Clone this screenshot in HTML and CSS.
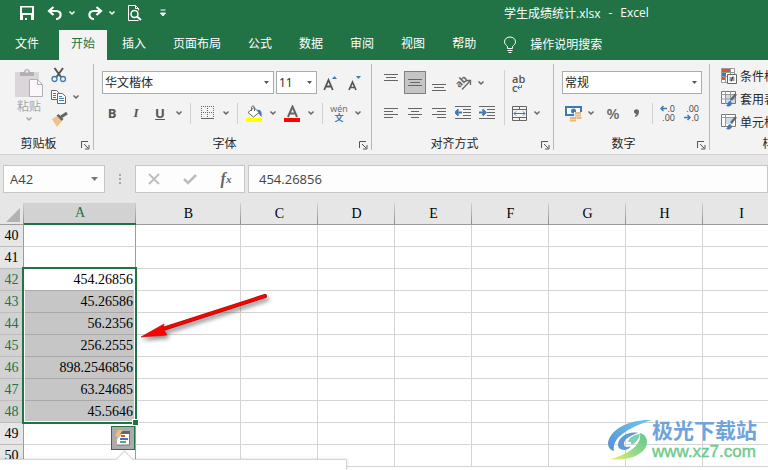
FILE: index.html
```html
<!DOCTYPE html>
<html lang="zh-CN">
<head>
  <meta charset="UTF-8" />
  <meta name="viewport" content="width=device-width, initial-scale=1.0"/>
  <title>学生成绩统计.xlsx - Excel</title>
  <link rel="stylesheet" href="styles.css">
</head>
<body>
  <svg class="defs" width="0" height="0" aria-hidden="true">
    <symbol id="chev" viewBox="0 0 8 6"><path d="M1.5 1.5 4 4 6.5 1.5" fill="none" stroke="currentColor" stroke-width="1.5"/></symbol>
    <symbol id="launch" viewBox="0 0 9 9"><path d="M.5 7V.5H7M3 3l4 4M8 4v4H4" fill="none" stroke="currentColor"/></symbol>
  </svg>

  <header class="top">
    <div class="titlebar">
      <button class="icon-btn" aria-label="保存"><svg width="14" height="14" viewBox="0 0 14 14"><path d="M0 0h14v14H0zM2 1.500V7h10V1.500zM3 9v5h2v-2h2v2h4V9z" fill="#fff" fill-rule="evenodd"/></svg></button>
      <div class="split">
        <button class="icon-btn" aria-label="撤消"><svg width="16" height="14" viewBox="0 0 16 14"><path d="M2 5h7.500c6 0 5 8-.5 8M6.500 1l-4.500 4 4.500 4" fill="none" stroke="#fff" stroke-width="2.200"/></svg></button>
        <button class="chev" aria-label="撤消列表"><svg width="8" height="6"><use href="#chev"/></svg></button>
      </div>
      <div class="split">
        <button class="icon-btn" aria-label="恢复"><svg width="16" height="14" viewBox="0 0 16 14"><path d="M14 5H6.500c-6 0-5 8 .5 8M9.500 1 14 5 9.500 9" fill="none" stroke="#fff" stroke-width="2.200"/></svg></button>
        <button class="chev" aria-label="恢复列表"><svg width="8" height="6"><use href="#chev"/></svg></button>
      </div>
      <button class="icon-btn" aria-label="打印预览"><svg width="16" height="16" viewBox="0 0 16 16" fill="none" stroke="#fff"><path d="M11.500 15.500H1.500V.5h7l3 3v2M8.500.5v3h3"/><circle cx="7.500" cy="9" r="3.500" stroke-width="1.500"/><path d="m10 11.500 4 3.500" stroke-width="2"/></svg></button>
      <button class="icon-btn" aria-label="自定义快速访问工具栏"><svg width="6" height="8" viewBox="0 0 6 8"><path d="M.5 1h5M.5 4h5L3 7z" fill="#fff" stroke="#fff"/></svg></button>
      <div class="doc-title"><span>学生成绩统计.xlsx</span><span>-</span><span>Excel</span></div>
    </div>
    <nav class="tabs">
      <a class="tab file" href="#">文件</a>
      <a class="tab active" href="#">开始</a>
      <a class="tab" href="#">插入</a>
      <a class="tab" href="#">页面布局</a>
      <a class="tab" href="#">公式</a>
      <a class="tab" href="#">数据</a>
      <a class="tab" href="#">审阅</a>
      <a class="tab" href="#">视图</a>
      <a class="tab" href="#">帮助</a>
      <a class="tab tell-me" href="#"><svg width="14" height="18" viewBox="0 0 14 18" fill="none" stroke="#fff"><path d="M4.500 12.500v-2C3 9 1.500 8 1.500 5.800 1.500 3 4 1 7 1s5.500 2 5.500 4.800c0 2.200-1.500 3.200-3 4.700v2zM4.500 14.500h5M5.500 16.500h3"/></svg>操作说明搜索</a>
    </nav>
  </header>

  <section class="ribbon">
    <div class="group clipboard">
      <div class="content">
        <button class="paste" disabled>
          <svg width="30" height="30" viewBox="0 0 30 30"><path d="M1 4h24v25H1z" fill="#dad6da"/><path d="M6 8V4h4c0-4 6-4 6 0h4v4z" fill="#b3b0b3"/><circle cx="13" cy="3.500" r="1.300" fill="#f3f3f3"/><path d="M15.500 11.500h8l5 5v12h-13z" fill="#fbf7fb" stroke="#b3aeb5"/><path d="M23.500 11.500v5h5" fill="none" stroke="#b3aeb5"/></svg>
          <span>粘贴</span>
          <svg width="8" height="6"><use href="#chev"/></svg>
        </button>
        <div class="stack">
          <button class="icon-btn" aria-label="剪切"><svg width="16" height="16" viewBox="0 0 16 16" fill="none"><path d="M3.500 1 10 10M12 1 5.500 10" stroke="#555" stroke-width="2"/><circle cx="3.500" cy="12" r="2.500" stroke="#3f79b5" stroke-width="1.300"/><circle cx="12" cy="12" r="2.500" stroke="#3f79b5" stroke-width="1.300"/></svg></button>
          <div class="split">
            <button class="icon-btn" aria-label="复制"><svg width="16" height="14" viewBox="0 0 16 14" fill="#fff" stroke="#666"><path d="M.5.5h5l2 2v7h-7z"/><path d="M6.500 3.500h5l3 3v7h-8z"/><path d="M2 3.500h3M2 5.500h3M2 7.500h3M8 6.500h3M8 8.500h5M8 10.500h5" stroke="#3f79b5"/></svg></button>
            <button class="chev" aria-label="复制选项"><svg width="8" height="6"><use href="#chev"/></svg></button>
          </div>
          <button class="icon-btn" aria-label="格式刷"><svg width="17" height="15" viewBox="0 0 17 15"><path d="M1 7l5-3 5 5-5 6z" fill="#ecc48a"/><path d="m5.500 3.500 2-1.500 5 5-1.800 2z" fill="#666"/><path d="m10 5 6-4" stroke="#666" stroke-width="3"/></svg></button>
        </div>
      </div>
      <div class="footer"><span>剪贴板</span><button class="launcher" aria-label="剪贴板设置"><svg width="9" height="9"><use href="#launch"/></svg></button></div>
    </div>

    <div class="group font">
      <div class="content rows">
        <div class="row tight">
          <select class="combo font-name" aria-label="字体"><option>华文楷体</option></select>
          <select class="combo font-size" aria-label="字号"><option>11</option></select>
          <button class="tool" aria-label="增大字号"><svg width="14" height="16" viewBox="0 0 14 16"><path d="M1.200 15 5.500 5l4.300 10M2.800 11.500h5.400" fill="none" stroke="#555" stroke-width="1.800"/><path d="m9 4 2.500-3L14 4z" fill="#3f79b5"/></svg></button>
          <button class="tool" aria-label="减小字号"><svg width="14" height="16" viewBox="0 0 14 16"><path d="M2 15 5.500 7 9 15M3.500 12.500h4" fill="none" stroke="#555" stroke-width="1.700"/><path d="m9 1 2.500 3L14 1z" fill="#3f79b5"/></svg></button>
        </div>
        <div class="row loose">
          <button class="icon-btn letter bold">B</button>
          <button class="icon-btn letter italic">I</button>
          <button class="icon-btn letter under">U</button>
          <button class="chev" aria-label="下划线选项"><svg width="8" height="6"><use href="#chev"/></svg></button>
          <span class="sep"></span>
          <button class="icon-btn" aria-label="边框"><svg width="13" height="14" viewBox="0 0 13 14" fill="none" stroke="#666"><path d="M0 .5h13M0 6.500h13M.5 0v12M6.500 0v12M12.500 0v12" stroke-dasharray="1 1"/><path d="M0 12.500h13" stroke-width="1"/></svg></button>
          <button class="chev" aria-label="边框选项"><svg width="8" height="6"><use href="#chev"/></svg></button>
          <span class="sep"></span>
          <button class="icon-btn" aria-label="填充颜色"><svg width="16" height="17" viewBox="0 0 16 17"><path d="M11 5c4-1 5 2 4.500 7L13 9z" fill="#3f79b5"/><path d="m2 7.500 6-5 5 5L7.500 12z" fill="#fff" stroke="#666"/><path d="M5.500 6V2.500c0-2 3-2 3 0V6" fill="none" stroke="#666"/><path d="M0 13h16v4H0z" fill="#ff0"/></svg></button>
          <button class="chev" aria-label="填充颜色选项"><svg width="8" height="6"><use href="#chev"/></svg></button>
          <button class="icon-btn" aria-label="字体颜色"><svg width="16" height="17" viewBox="0 0 16 17"><path d="M4 12 8.500 1.500 13 12M5.500 8.500h6" fill="none" stroke="#666" stroke-width="2"/><path d="M0 13h16v4H0z" fill="red"/></svg></button>
          <button class="chev" aria-label="字体颜色选项"><svg width="8" height="6"><use href="#chev"/></svg></button>
          <span class="sep"></span>
          <button class="icon-btn phonetic"><span>wén</span><b>文</b></button>
          <button class="chev" aria-label="拼音选项"><svg width="8" height="6"><use href="#chev"/></svg></button>
        </div>
      </div>
      <div class="footer"><span>字体</span><button class="launcher" aria-label="字体设置"><svg width="9" height="9"><use href="#launch"/></svg></button></div>
    </div>

    <div class="group align">
      <div class="content">
        <div class="rows align-main">
          <div class="row tight">
            <button class="tool" aria-label="顶端对齐"><svg width="14" height="18" viewBox="0 0 14 18"><path d="M0 .5h14M2 3.500h10M0 6.500h14" stroke="#666"/></svg></button>
            <button class="tool pressed" aria-label="垂直居中"><svg width="14" height="8" viewBox="0 0 14 8"><path d="M0 .5h14M2 3.500h10M0 6.500h14" stroke="#666"/></svg></button>
            <button class="tool" aria-label="底端对齐"><svg width="14" height="18" viewBox="0 0 14 18"><path d="M0 10.500h14M2 13.500h10M0 16.500h14" stroke="#666"/></svg></button>
            <button class="tool" aria-label="方向"><svg class="orient" width="17" height="17" viewBox="0 0 17 17"><text x="0" y="12" transform="rotate(-45 5 8)">ab</text><path d="M7 15.500 15 7M11 6.500h4.500V11" fill="none" stroke="#666" stroke-width="1.300"/></svg></button>
            <button class="chev" aria-label="方向选项"><svg width="8" height="6"><use href="#chev"/></svg></button>
          </div>
          <div class="row tight">
            <button class="tool" aria-label="左对齐"><svg width="14" height="12" viewBox="0 0 14 12"><path d="M0 1.500h14M0 4.500h9M0 7.500h14M0 10.500h9" stroke="#666"/></svg></button>
            <button class="tool" aria-label="居中"><svg width="14" height="12" viewBox="0 0 14 12"><path d="M0 1.500h14M3 4.500h8M0 7.500h14M3 10.500h8" stroke="#666"/></svg></button>
            <button class="tool" aria-label="右对齐"><svg width="14" height="12" viewBox="0 0 14 12"><path d="M0 1.500h14M5 4.500h9M0 7.500h14M5 10.500h9" stroke="#666"/></svg></button>
            <button class="tool" aria-label="减少缩进量"><svg width="16" height="14" viewBox="0 0 16 14"><path d="M0 .5h16M8 3.500h8M8 6.500h8M8 9.500h8M0 12.500h16" stroke="#666"/><path d="M7 6.500H1M3.500 3.500l-3 3 3 3" fill="none" stroke="#3f79b5" stroke-width="2"/></svg></button>
            <button class="tool" aria-label="增加缩进量"><svg width="16" height="14" viewBox="0 0 16 14"><path d="M0 .5h16M8 3.500h8M8 6.500h8M8 9.500h8M0 12.500h16" stroke="#666"/><path d="M0 6.500h6M3.500 3.500l3 3-3 3" fill="none" stroke="#3f79b5" stroke-width="2"/></svg></button>
          </div>
        </div>
        <div class="rows align-side">
          <div class="row tight">
            <button class="tool wrap"><span>ab</span><span>c<svg width="5" height="5" viewBox="0 0 5 5"><path d="M4.500 0v2.500H1M2.500.5l-2 2 2 2" fill="none" stroke="#3f79b5"/></svg></span></button>
          </div>
          <div class="row tight">
            <button class="tool" aria-label="合并后居中"><svg width="15" height="15" viewBox="0 0 15 15" fill="none" stroke="#666"><path d="M.5.5h14v14H.5zM0 3.500h15M0 11.500h15M7.500 0v3M7.500 12v3"/><path d="M2 7.500h11M4 5.500l-2 2 2 2M11 5.500l2 2-2 2" stroke="#3f79b5"/></svg></button>
            <button class="chev" aria-label="合并选项"><svg width="8" height="6"><use href="#chev"/></svg></button>
          </div>
        </div>
      </div>
      <div class="footer"><span>对齐方式</span><button class="launcher" aria-label="对齐设置"><svg width="9" height="9"><use href="#launch"/></svg></button></div>
    </div>

    <div class="group number">
      <div class="content rows">
        <div class="row tight">
          <select class="combo format" aria-label="数字格式"><option>常规</option></select>
        </div>
        <div class="row tight">
          <button class="tool" aria-label="会计数字格式"><svg width="17" height="17" viewBox="0 0 17 17"><path d="M1 2h15v8H1z" fill="#fff" stroke="#3f79b5" stroke-width="2"/><circle cx="8.500" cy="6" r="2.500" fill="#3f79b5"/><path d="M9 7h8v9H4v-4h5z" fill="#f3f3f3"/><path d="M10 8h6M10 10.500h6M5 13h6M5 15.500h6M11.500 13h5" stroke="#e8b878" stroke-width="1.800"/></svg></button>
          <button class="chev after" aria-label="会计格式选项"><svg width="8" height="6"><use href="#chev"/></svg></button>
          <button class="tool sign">%</button>
          <button class="tool" aria-label="千位分隔样式"><svg width="6" height="9" viewBox="0 0 6 9"><path d="M0 2.500C0-.5 5-.5 5 2.500 5 6 3 7.500 1 8V6.500C2 6 2.500 5.500 2.500 5 1 5 0 4 0 2.500z" fill="#666"/></svg></button>
          <span class="sep"></span>
          <button class="tool decimals"><span><svg width="7" height="7" viewBox="0 0 7 7"><path d="M7 3.500H1M3.500 1 1 3.500 3.500 6" fill="none" stroke="#3f79b5" stroke-width="1.500"/></svg>.0</span><span>.00</span></button>
          <button class="tool decimals"><span>.00</span><span><svg width="7" height="7" viewBox="0 0 7 7"><path d="M0 3.500h6M3.500 1 6 3.500 3.500 6" fill="none" stroke="#3f79b5" stroke-width="1.500"/></svg>.0</span></button>
        </div>
      </div>
      <div class="footer"><span>数字</span><button class="launcher" aria-label="数字设置"><svg width="9" height="9"><use href="#launch"/></svg></button></div>
    </div>

    <div class="group styles">
      <div class="content stack">
        <button class="style-btn"><svg width="16" height="16" viewBox="0 0 16 16"><path d="M.5.5h13v14H.5z" fill="#fff" stroke="#999"/><path d="M0 4.500h14M0 8.500h14M4.500 0v15M9.500 0v8" stroke="#999"/><path d="M1 1h8v3H1z" fill="#d65532"/><path d="M1 5h4v3H1z" fill="#3f79b5"/><path d="M1 9h3v3H1z" fill="#d65532"/><path d="M6.500 6.500h9v9h-9z" fill="#fff" stroke="#666"/><path d="M8.500 10h5M8.500 12h5M12 8.500l-2 5" stroke="#333"/></svg>条件格式</button>
        <button class="style-btn"><svg width="16" height="16" viewBox="0 0 16 16"><path d="M.5.5h14v12H.5z" fill="#fff" stroke="#777"/><path d="M4 4h10v8H4z" fill="#c9dcee"/><path d="M0 3.500h15M0 8h15M4.500 0v13M9.500 0v13" stroke="#999"/><path d="m15 3-5 6" stroke="#666" stroke-width="2.500"/><path d="M5 15c2-1 1-4 4-5l2 2c0 3-3 4-6 3z" fill="#3f79b5"/></svg>套用表格格式</button>
        <button class="style-btn"><svg width="16" height="16" viewBox="0 0 16 16"><path d="M.5.5h14v12H.5z" fill="#fff" stroke="#777"/><path d="M4 4h8v6H4z" fill="#c9dcee"/><path d="M0 3.500h15M4.500 0v13" stroke="#999"/><path d="m15 3-5 6" stroke="#666" stroke-width="2.500"/><path d="M5 15c2-1 1-4 4-5l2 2c0 3-3 4-6 3z" fill="#3f79b5"/></svg>单元格样式</button>
      </div>
      <div class="footer"><span>样式</span></div>
    </div>
  </section>

  <section class="formula-bar">
    <div class="name-box">
      <input type="text" value="A42" aria-label="名称框">
      <button aria-label="名称列表"><svg width="7" height="4" viewBox="0 0 7 4"><path d="M0 0h7L3.500 4z" fill="#777"/></svg></button>
    </div>
    <span class="dots"><i></i><i></i><i></i></span>
    <div class="entry-btns">
      <button aria-label="取消"><svg width="12" height="12" viewBox="0 0 12 12"><path d="m1 1 10 10M11 1 1 11" stroke="#bdbdbd" stroke-width="1.800"/></svg></button>
      <button aria-label="输入"><svg width="14" height="12" viewBox="0 0 14 12"><path d="m1 6 4 4 8-8" fill="none" stroke="#bdbdbd" stroke-width="2.500"/></svg></button>
      <button class="fx">f<sub>x</sub></button>
    </div>
    <input class="formula" type="text" value="454.26856" aria-label="编辑栏">
  </section>

  <main class="sheet">
    <table>
      <colgroup><col class="c-head"><col class="c-a"><col class="c-b"><col class="c"><col class="c"><col class="c"><col class="c"><col class="c"><col class="c"><col class="c"></colgroup>
      <thead>
        <tr><th class="corner"><svg width="14" height="14" viewBox="0 0 14 14"><path d="M14 0v14H0z" fill="#b2b2b2"/></svg></th><th class="on">A</th><th>B</th><th>C</th><th>D</th><th>E</th><th>F</th><th>G</th><th>H</th><th>I</th></tr>
      </thead>
      <tbody>
        <tr><th>40</th><td></td><td></td><td></td><td></td><td></td><td></td><td></td><td></td><td></td></tr>
        <tr><th>41</th><td></td><td></td><td></td><td></td><td></td><td></td><td></td><td></td><td></td></tr>
        <tr class="sel current"><th>42</th><td>454.26856</td><td></td><td></td><td></td><td></td><td></td><td></td><td></td><td></td></tr>
        <tr class="sel"><th>43</th><td>45.26586</td><td></td><td></td><td></td><td></td><td></td><td></td><td></td><td></td></tr>
        <tr class="sel"><th>44</th><td>56.2356</td><td></td><td></td><td></td><td></td><td></td><td></td><td></td><td></td></tr>
        <tr class="sel"><th>45</th><td>256.2555</td><td></td><td></td><td></td><td></td><td></td><td></td><td></td><td></td></tr>
        <tr class="sel"><th>46</th><td>898.2546856</td><td></td><td></td><td></td><td></td><td></td><td></td><td></td><td></td></tr>
        <tr class="sel"><th>47</th><td>63.24685</td><td></td><td></td><td></td><td></td><td></td><td></td><td></td><td></td></tr>
        <tr class="sel"><th>48</th><td>45.5646</td><td></td><td></td><td></td><td></td><td></td><td></td><td></td><td></td></tr>
        <tr><th>49</th><td></td><td></td><td></td><td></td><td></td><td></td><td></td><td></td><td></td></tr>
        <tr><th>50</th><td></td><td></td><td></td><td></td><td></td><td></td><td></td><td></td><td></td></tr>
      </tbody>
    </table>
    <div class="selection"></div>
    <button class="quick" aria-label="快速分析"><svg width="16" height="16" viewBox="0 0 16 16"><path d="M3 2h12v13H2V8z" fill="#fff"/><path d="M6 1h9v3H5z" fill="#666"/><path d="M14.500 3v12H2" fill="none" stroke="#777"/><path d="M6 5h4v2H6z" fill="#d65532"/><path d="M5 8h8v2H5z" fill="#3f79b5"/><path d="M5 11h6v2H5z" fill="#5fa08a"/><path d="M3 0h5L5 4h2l-6 7 1.500-5H0z" fill="#ecc07c"/></svg></button>
    <div class="popup"></div>
    <svg class="arrow" width="134" height="54" viewBox="0 0 134 54"><path d="M126 6 24 39" stroke="#a01010" stroke-width="4" stroke-linecap="round"/><path d="M126 6 24 39" stroke="#fe0000" stroke-width="2.800" stroke-linecap="round"/><path d="m2 47 23-13-1 5 4 6z" fill="#fe0000" stroke="#c01010" stroke-width=".7"/></svg>
    <div class="watermark">
      <svg width="46" height="42" viewBox="0 0 46 42">
        <defs>
          <linearGradient id="wb" x1="0" y1="1" x2="1" y2="0"><stop offset="0" stop-color="#5a8fd0"/><stop offset="1" stop-color="#6cc8f0"/></linearGradient>
          <linearGradient id="wg" x1="0" y1="1" x2="1" y2="0"><stop offset="0" stop-color="#eef06a"/><stop offset=".5" stop-color="#8fd88a"/><stop offset="1" stop-color="#5cc98a"/></linearGradient>
        </defs>
        <path d="M45 1C26 0 4 9 2 24c0 4 2 7 6 8-2-13 12-22 37-31z" fill="url(#wb)"/>
        <path d="M4 40c20 3 37-6 37-17 0-5-3-8-7-9 2 12-11 21-30 26z" fill="url(#wg)"/>
        <path d="M32 14c-10-2-19 4-20 11-1 7 10 8 13 2-4 2-8 1-7-3 1-5 8-8 14-10z" fill="#5f9ad8"/>
        <path d="M34 15c-8 1-12 5-12 8 2-1 4 0 3 3 5-2 8-6 9-11z" fill="#80d0b0"/>
      </svg>
      <div class="mark-text"><b>极光下载站</b><span>www.xz7.com</span></div>
    </div>
  </main>
</body>
</html>
```

FILE: styles.css
```css
* {
  box-sizing: border-box;
}
body {
  margin: 0;
  height: 100vh;
  overflow: hidden;
  display: flex;
  flex-direction: column;
  font-family: "Open Sans", "Noto Sans CJK SC", sans-serif;
  font-size: 12px;
  color: #262626;
  background: #e6e6e6;
}
button, input, select {
  font: inherit;
  color: inherit;
  border: 0;
  padding: 0;
  margin: 0;
  background: none;
}
button {
  display: flex;
  align-items: center;
  justify-content: center;
  flex: none;
}
svg {
  display: block;
  flex: none;
}
.defs {
  position: absolute;
}

/* title bar and tabs */
.top {
  background: #217346;
  color: #fff;
  flex: none;
}
.titlebar {
  display: flex;
  align-items: center;
  gap: 8px;
  height: 30px;
  padding: 0 0 4px 17px;
}
.icon-btn {
  width: 20px;
  height: 22px;
}
.chev {
  width: 10px;
  height: 22px;
}
.split {
  display: flex;
  gap: 2px;
}
.doc-title {
  display: flex;
  gap: 8px;
  margin-left: 323px;
  white-space: nowrap;
}
.tabs {
  display: flex;
  gap: 3px;
  height: 30px;
  padding-left: 3px;
}
.tab {
  padding: 0 12px;
  line-height: 28px;
  color: #fff;
  text-decoration: none;
  white-space: nowrap;
}
.tab.file {
  padding-right: 17px;
}
.tab.active {
  background: #f3f3f3;
  color: #217346;
}
.tell-me {
  display: flex;
  align-items: center;
  gap: 13px;
}

/* ribbon */
.ribbon {
  display: flex;
  flex: none;
  overflow: hidden;
  padding: 4px 0;
  background: #f3f3f3;
  border-bottom: 1px solid #d2d2d2;
}
.group {
  display: flex;
  flex-direction: column;
  flex: none;
  height: 86px;
  border-right: 1px solid #b8b8b8;
}
.clipboard { width: 94px; }
.font { width: 278px; }
.align { width: 182px; }
.number { width: 156px; }
.styles { width: 130px; }
.content {
  display: flex;
  flex: 1;
}
.group .chev, .group .icon-btn {
  color: #666;
}
.footer {
  display: flex;
  height: 14px;
  line-height: 16px;
}
.footer span {
  flex: 1;
  text-align: center;
}
.launcher {
  width: 16px;
  height: 18px;
  color: #555;
}
.group .paste {
  flex-direction: column;
  justify-content: flex-start;
  width: 30px;
  margin: 4px 5px 0 14px;
  color: #a6a6a6;
}
.paste span {
  line-height: 18px;
}
.stack {
  display: flex;
  flex-direction: column;
}
.rows {
  display: flex;
  flex-direction: column;
  gap: 8px;
  padding: 7px 0 0 8px;
}
.row {
  display: flex;
  align-items: center;
  height: 23px;
}
.rows .row + .row {
  height: 22px;
}
.tight {
  gap: 2px;
}
.loose {
  gap: 4px;
}
.combo {
  appearance: none;
  height: 23px;
  padding-left: 2px;
  border: 1px solid #ababab;
  background: url("data:image/svg+xml,%3Csvg xmlns='http://www.w3.org/2000/svg' width='5' height='3'%3E%3Cpath d='M0 0h5L2.500 3z' fill='%23555'/%3E%3C/svg%3E") no-repeat right 4px center #fff;
}
.font-name { width: 172px; }
.font-size { width: 41px; }
.format { width: 140px; }
.tool {
  width: 22px;
  height: 23px;
}
.pressed {
  background: #c5c5c5;
  border: 1px solid #7f7f7f;
}
.sep {
  width: 1px;
  height: 21px;
  margin: 0 2px;
  background: #d0d0d0;
}
.letter {
  font-size: 13px;
  font-weight: bold;
}
.group .letter {
  color: #555;
}
.italic {
  font-family: "Liberation Serif", serif;
  font-style: italic;
}
.under {
  text-decoration: underline;
}
.phonetic {
  flex-direction: column;
  font-size: 9px;
  line-height: 9px;
}
.phonetic b {
  color: #3f79b5;
}
.align-main {
  width: 132px;
}
.align-side {
  position: relative;
  padding-left: 4px;
}
.align-side::before {
  content: "";
  position: absolute;
  left: 0;
  top: 6px;
  height: 55px;
  width: 1px;
  background: #d0d0d0;
}
.orient {
  overflow: visible;
  font-size: 10px;
  font-weight: bold;
  fill: #666;
}
.wrap {
  flex-direction: column;
  align-items: flex-start;
  padding-left: 4px;
  font-size: 11px;
  line-height: 9px;
  font-weight: 600;
  color: #555;
}
.wrap span, .decimals span {
  display: flex;
  align-items: center;
}
.chev.after {
  margin-right: 4px;
}
.sign {
  font-size: 15px;
  font-weight: 600;
  color: #666;
}
.decimals {
  flex-direction: column;
  align-items: flex-end;
  padding-right: 4px;
  font-size: 9px;
  line-height: 9px;
  color: #444;
}
.style-btn {
  justify-content: flex-start;
  gap: 3px;
  height: 23px;
  padding-left: 11px;
  white-space: nowrap;
}

/* formula bar */
.formula-bar {
  display: flex;
  flex: none;
  height: 48px;
  padding: 10px 0 10px 3px;
  font-size: 13px;
  color: #444;
}
.name-box, .entry-btns, .formula {
  background: #fdfdfd;
  border: 1px solid #c6c6c6;
}
.name-box {
  display: flex;
  width: 102px;
  padding-right: 6px;
}
.name-box input {
  flex: 1;
  min-width: 0;
  padding-left: 6px;
}
.dots {
  display: flex;
  flex-direction: column;
  align-items: center;
  justify-content: center;
  gap: 2px;
  width: 30px;
}
.dots i {
  width: 2px;
  height: 2px;
  background: #a6a6a6;
}
.entry-btns {
  display: flex;
  width: 110px;
  margin-right: 3px;
}
.entry-btns button {
  width: 36px;
}
.entry-btns .fx {
  font: italic bold 16px "Liberation Serif", serif;
  color: #666;
}
.fx sub {
  font-size: 11px;
}
.formula {
  flex: 1;
  min-width: 0;
  padding-left: 10px;
}

/* grid */
.sheet {
  position: relative;
  flex: 1;
  overflow: hidden;
  font-family: "Liberation Serif", serif;
  font-size: 14px;
  background: #fff;
}
table {
  width: 780px;
  table-layout: fixed;
  border-collapse: separate;
  border-spacing: 0;
  color: #000;
}
.c-head { width: 24px; }
.c-a { width: 112px; }
.c-b { width: 105px; }
.c { width: 77px; }
th, td {
  height: 22px;
  padding: 0;
  line-height: 21px;
  border-right: 1px solid #d4d4d4;
  border-bottom: 1px solid #d4d4d4;
}
th {
  font-weight: normal;
  background: #e6e6e6;
  border-color: #9b9b9b;
}
thead th {
  line-height: 20px;
  border-right: 0;
  background: linear-gradient(#cfcfcf, #8f8f8f) no-repeat right / 1px 100% #e6e6e6;
}
thead .on {
  color: #217346;
  background-color: #d2d2d2;
  border-bottom: 2px solid #217346;
}
.corner svg {
  margin: 2px 0 0 6px;
}
tbody th {
  border-bottom-color: #bdbdbd;
}
td {
  text-align: right;
  padding-right: 2px;
}
td:nth-child(2) {
  border-right-color: #9b9b9b;
}
.sel th {
  color: #217346;
  background: #d2d2d2;
}
.sel td:nth-child(2) {
  background: #c6c6c6;
  border-bottom-color: #a8a8a8;
}
.current td:nth-child(2) {
  background: #fff;
}
.selection {
  position: absolute;
  left: 22px;
  top: 64px;
  width: 115px;
  height: 157px;
  border: 2px solid #217346;
  box-shadow: inset 0 0 0 1px #fff;
}
.selection::after {
  content: "";
  position: absolute;
  right: -3px;
  bottom: -3px;
  width: 5px;
  height: 5px;
  background: #217346;
  outline: 1px solid #fff;
}
.quick {
  position: absolute;
  left: 111px;
  top: 223px;
  width: 24px;
  height: 24px;
  background: #ababab;
  border: 1px solid #217346;
}
.popup {
  position: absolute;
  left: -1px;
  top: 256px;
  width: 348px;
  height: 40px;
  background: #fff;
  border: 1px solid #d6d6d6;
  box-shadow: 0 0 3px rgba(0,0,0,0.15);
}
.popup::before {
  content: "";
  position: absolute;
  left: 118px;
  top: -7px;
  width: 12px;
  height: 12px;
  background: #fff;
  border: 1px solid #d6d6d6;
  border-width: 1px 0 0 1px;
  transform: rotate(45deg);
}
.arrow {
  position: absolute;
  left: 139px;
  top: 87px;
  filter: drop-shadow(2px 3px 2px rgba(0,0,0,0.45));
}
.watermark {
  position: absolute;
  right: 10px;
  bottom: 9px;
  display: flex;
}
.mark-text {
  display: flex;
  flex-direction: column;
  width: 106px;
  font-family: "Liberation Sans", "Noto Sans CJK SC", sans-serif;
}
.mark-text b {
  font-size: 21px;
  line-height: 24px;
  color: #6fa3dc;
  white-space: nowrap;
}
.mark-text span {
  font-size: 17px;
  line-height: 18px;
  color: #6ccb8a;
  -webkit-text-stroke: 0.4px #6ccb8a;
}
```
